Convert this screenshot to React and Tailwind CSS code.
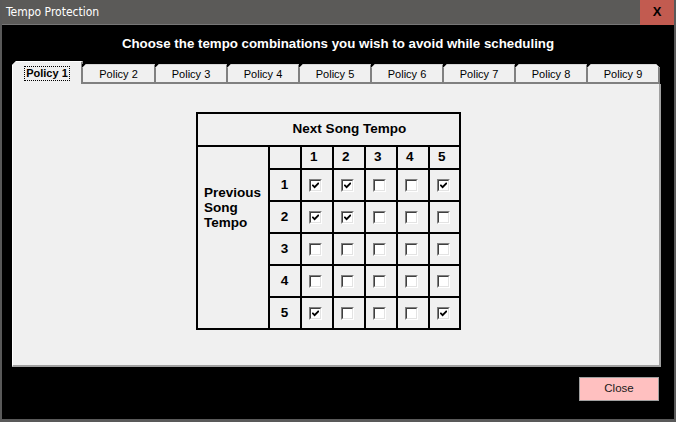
import React from "react";

const tabs = ["Policy 1", "Policy 2", "Policy 3", "Policy 4", "Policy 5", "Policy 6", "Policy 7", "Policy 8", "Policy 9"];

const grid = [
  [1, 1, 0, 0, 1],
  [1, 1, 0, 0, 0],
  [0, 0, 0, 0, 0],
  [0, 0, 0, 0, 0],
  [1, 0, 0, 0, 1],
];

const Corner = ({ side }) => (
  <svg
    width="4"
    height="4"
    viewBox="0 0 4 4"
    className={side === "left" ? "absolute -left-px -top-px" : "absolute -right-[2px] -top-px"}
  >
    {side === "left" ? (
      <>
        <path d="M0 0H4L0 4Z" fill="#000" />
        <path d="M0 4L4 0" stroke="#a0a0a0" strokeWidth="1" />
      </>
    ) : (
      <>
        <path d="M0 0H4V4Z" fill="#000" />
        <path d="M0 0L4 4" stroke="#a0a0a0" strokeWidth="1" />
      </>
    )}
  </svg>
);

const Check = ({ on }) => (
  <span className="flex h-[13px] w-[13px] items-center justify-center border border-t-[#808080] border-l-[#808080] border-b-white border-r-white bg-white">
    <span className="flex h-[11px] w-[11px] items-center justify-center border border-t-[#404040] border-l-[#404040] border-b-[#e3e3e3] border-r-[#e3e3e3] bg-white">
      {on ? (
        <svg width="7" height="7" viewBox="0 0 7 7">
          <path d="M0.3 2.8L2.6 5.2L6.8 0.8" stroke="#000" strokeWidth="1.8" fill="none" />
        </svg>
      ) : null}
    </span>
  </span>
);

export default function App() {
  return (
    <div className="flex h-[422px] w-[676px] flex-col bg-[#595959] px-[2px] pb-[3px] font-['Liberation_Sans',Arial,sans-serif]">
      {/* title bar */}
      <div className="flex h-[25px] items-center border-b border-[#777] bg-[#5b5a58]">
        <span className="pl-[4px] font-['Liberation_Sans_Narrow','DejaVu_Sans_Condensed',sans-serif] text-[12px] text-white">
          Tempo Protection
        </span>
        <div className="ml-auto flex h-[25px] w-[34px] items-center justify-center bg-[#c25b50] text-[13px] font-bold text-black">
          X
        </div>
      </div>

      {/* body */}
      <div className="flex flex-1 flex-col bg-black pl-[10px]">
        <div className="flex h-[36px] items-center justify-center pr-[10px] pt-[2px] text-[13.3px] font-bold text-white">
          Choose the tempo combinations you wish to avoid while scheduling
        </div>

        {/* tabs */}
        <div className="flex h-[23px] w-[649px] items-end">
          {tabs.map((t, i) =>
            i === 0 ? (
              <div
                key={t}
                className="relative flex h-[23px] w-[71px] items-start justify-center border-l border-t border-white border-r-2 border-r-[#808080] bg-[#f0f0f0] pt-[5px] text-[11px] font-bold text-black"
              >
                <Corner side="left" />
                <span className="px-px leading-[13px] outline outline-1 outline-dotted outline-black">{t}</span>
              </div>
            ) : (
              <div
                key={t}
                className={`relative flex h-[20px] ${i === 1 ? "w-[73px]" : "w-[72px]"} items-center justify-center border-b-2 border-t border-b-[#808080] border-t-[#d8d8d8] border-r-2 border-r-[#808080] bg-[#f0f0f0] pt-[2px] text-[11px] text-black`}
              >
                <Corner side="left" />
                {i === 8 ? <Corner side="right" /> : null}
                {t}
              </div>
            )
          )}
        </div>

        {/* panel */}
        <div className="h-[283px] w-[649px] border-b-2 border-l border-r-2 border-b-[#a0a0a0] border-l-white border-r-[#a0a0a0] bg-[#f0f0f0] pt-[28px]">
          <div className="ml-[183px] grid w-[265px] grid-cols-[70px_30px_30px_30px_30px_30px_29px] grid-rows-[31px_21px_30px_30px_30px_30px_30px] gap-[2px] bg-black p-[2px] text-[13.5px] font-bold text-black">
            <div className="col-span-7 flex items-center justify-center bg-[#f0f0f0] pl-[42px]">Next Song Tempo</div>
            <div className="row-span-6 bg-[#f0f0f0] pl-[6px] pt-[38px] leading-[15px]">
              Previous
              <br />
              Song
              <br />
              Tempo
            </div>
            <div className="bg-[#f0f0f0]" />
            {[1, 2, 3, 4, 5].map((n) => (
              <div key={"h" + n} className="flex items-center bg-[#f0f0f0] pl-[8px]">
                {n}
              </div>
            ))}
            {grid.map((row, r) => (
              <React.Fragment key={r}>
                <div className="flex items-center justify-center bg-[#f0f0f0] pr-[1px]">{r + 1}</div>
                {row.map((v, c) => (
                  <div key={c} className="flex items-center bg-[#f0f0f0] pl-[7px]">
                    <Check on={v === 1} />
                  </div>
                ))}
              </React.Fragment>
            ))}
          </div>
        </div>

        {/* footer */}
        <div className="flex w-[649px] justify-end pt-[10px]">
          <button className="mr-[2px] flex h-[24px] w-[80px] items-center justify-center border border-[#a0a0a0] bg-[#ffc0c0] text-[11.5px] text-[#1a1a1a]">
            Close
          </button>
        </div>
      </div>
    </div>
  );
}
